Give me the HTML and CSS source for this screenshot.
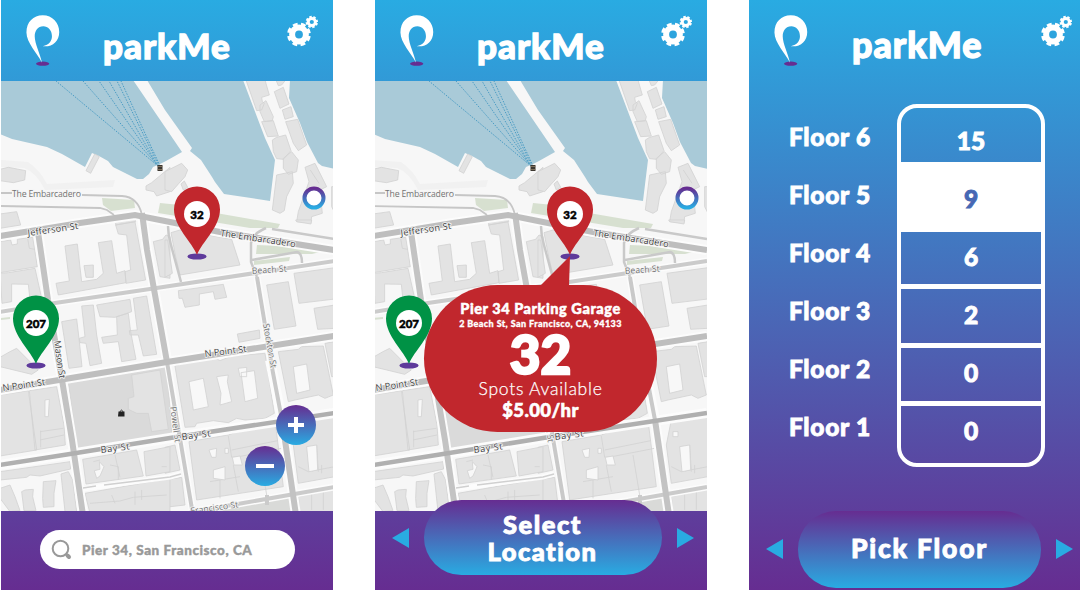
FILE: index.html
```html
<!DOCTYPE html>
<html lang="en">
<head>
<meta charset="utf-8">
<title>parkMe</title>
<link rel="stylesheet" href="styles.css">
</head>
<body>
<svg class="defs" width="0" height="0" aria-hidden="true">
  <defs>
    <linearGradient id="ring" x1="0" y1="0" x2="0" y2="1"><stop offset="0" stop-color="#662d91"/><stop offset="1" stop-color="#29abe2"/></linearGradient>
    <symbol id="logo" viewBox="78 44 102 154">
      <ellipse cx="128" cy="191" rx="20" ry="6.5" fill="#662d91"/>
      <path fill="#fff" d="M126 188C112 160 79 128 79 97C79 65 100 45 128 45C158 45 178 68 178 95C178 125 155 142 128 138C148 134 156 122 156 108C156 90 144 78 130 78C113 78 104 92 104 108C104 130 120 160 126 188Z"/>
    </symbol>
    <symbol id="gears" viewBox="0 0 32 32">
      <g fill="none" stroke="#fff">
        <circle cx="12" cy="19.5" r="6.9" stroke-width="6"/>
        <circle cx="12" cy="19.5" r="10.2" stroke-width="3.4" stroke-dasharray="4.700 3.311" stroke-dashoffset="-1.650"/>
        <circle cx="24.800" cy="7" r="3.600" stroke-width="3"/>
        <circle cx="24.800" cy="7" r="5.200" stroke-width="2" stroke-dasharray="2.400 1.684" stroke-dashoffset="-1"/>
      </g>
    </symbol>
    <g id="terrain">
      <rect x="0" y="80" width="340" height="435" fill="#f7f7f7"/>
      <g fill="#a9cad8">
        <path d="M0 80V134L12 139L47 147L62 154L85 167L92 153L99 156L108 161L113 167L125 173L137 179L143 179L149 174L153 167L160 164L166 161L182 152L133 80Z"/>
        <path d="M147 80L165 110L192 148L190 151L201 160L212 177L215 182L224 194L270 201L275 160L265 138L243 80Z"/>
        <path d="M290 80L289 98L300 123L307 142L318 163L322 166L335 169V80Z"/>
      </g>
      <path d="M0 160L28 162Q40 170 47 184L115 180L113 187L45 190Q36 172 24 168L0 167Z" fill="#f1f1f1"/>
      <g fill="none" stroke="#4b9cc4" stroke-width="1" stroke-dasharray="1.500 1.300">
        <path d="M158 166L56 81M158 166L83 81M158 166L99 81M158 166L109 81M159 166L117 81M160 166L121 81"/>
      </g>
      <g fill="#d7e0d0">
        <path d="M102 198L118 199L134 200L135 208L111 211L103 205Z"/>
        <path d="M160 203L180 205L216 213L280 224L278 228L250 228L158 213Z"/>
        <path d="M257 245L280 246L320 252L312 254L256 254Z"/>
        <path d="M254 261L290 257L289 261L254 265Z"/>
        <path d="M0 318L10 317V319L0 320Z"/>
      </g>
      <g fill="#e3e3e3" stroke="#d3d3d3" stroke-width="2.500" stroke-linejoin="round">
        <g transform="translate(0 80) scale(.3333)">
          <path d="M0 268L25 262L77 272L74 300L40 308L0 302ZM258 272L284 222L298 230L272 280ZM438 318L455 308L510 262V335L470 348L462 335L438 330ZM0 402L50 395L62 435L0 445Z"/>
        </g>
        <g transform="translate(165 80) scale(.3333)">
          <path d="M243 0L300 0L313 45L290 52L292 65L298 70L290 90L275 92ZM333 0L362 0L350 15L340 17ZM328 35L355 22L372 72L345 85ZM285 75L303 62L325 110L322 122L298 125L285 95ZM352 90L378 80L385 110L360 118ZM290 125L325 122L340 168L308 170ZM362 125L398 118L425 195L400 212L385 190ZM322 180L335 172L362 165L378 212L355 238L335 236L325 215ZM355 235L380 215L400 240L395 275L370 283L355 265ZM335 285L382 275L385 310L365 350L358 392L345 400L322 390ZM420 262L450 250L485 320L465 330L472 400L440 410L438 428L395 425L400 395L425 325L432 305ZM0 275L50 250L68 270L60 290L40 312L20 335L0 330ZM48 312L58 303L68 322L55 330ZM500 320H510V400L500 380Z"/>
          <path d="M436 270L462 310" fill="none"/>
        </g>
        <g transform="translate(0 220) scale(.3333)">
          <path d="M0 65L32 60L36 75L52 72L52 58L98 52L112 140L0 158ZM25 158L105 145L125 235L90 240L85 193L35 192L35 245L6 250L0 160ZM195 78L232 72L245 185L290 178L310 160L295 68L335 62L350 160L375 152L378 188L175 225L168 190L208 183ZM347 15L405 5L437 180L378 190L375 155L392 150L380 45L355 42ZM252 137L280 135L280 172L258 172ZM460 65L488 58L498 45L510 50V175L480 170ZM185 305L230 297L237 355L246 440L207 445ZM245 258L280 255L290 345L305 430L270 437L258 370L240 368L238 355L255 350ZM290 255L390 238L395 275L345 292L300 290ZM350 290L385 280L392 335L408 418L365 425L355 365L310 370L305 352L352 345ZM400 235L440 228L470 403L430 408L415 345L390 345L388 332L412 330ZM0 412L30 395L50 385L115 450L95 463L0 440ZM347 0L405 -8L407 5L347 15Z"/>
          <path d="M83 55L88 85L104 88" fill="none"/>
        </g>
        <g transform="translate(165 220) scale(.3333)">
          <path d="M18 38L45 30L200 58L225 135L45 165L32 110ZM0 60L8 60L22 160L0 172ZM40 212L175 193L185 232L150 238L145 215L103 222L103 255L60 262L52 235L42 235ZM305 195L370 185L393 318L328 328ZM387 160L510 143V237L402 250ZM447 265L510 255V325L458 328ZM217 342L283 330L285 355L222 367ZM392 0H440L438 12L395 5Z"/>
        </g>
        <g transform="translate(165 370) scale(.3333)">
          <path d="M30 -12L60 -22L150 -36L165 -28L200 -42L300 -50L328 130L300 145L240 150L215 145L190 158L145 152L95 160L90 170L60 172ZM340 -55L400 -62L410 -70L475 -72L505 75L480 85L460 75L390 90L370 95ZM480 -80L510 -85V20H500ZM0 60L10 95L12 170L0 175ZM0 232L30 225L45 300L0 310ZM0 330L50 322L60 405L0 412ZM72 215L190 195L230 180L332 166L355 350L290 360L95 390ZM385 225L400 150L510 130V320L400 340ZM400 380L510 355V430H405Z"/>
          <path d="M190 198L200 262L232 258L350 235M200 240L338 212M205 285L220 365M135 335L165 330V385M165 330L225 320M285 255L305 375M400 290L430 305L510 290M455 225L460 305M470 285V310M440 370V420M475 365V420" fill="none"/>
          <path d="M72 35L115 25L130 110L85 120ZM155 20L190 15L187 35L200 95L165 105L168 70ZM228 8L268 2L278 85L240 95ZM220 -5L245 -8V20H225ZM385 -10L425 -18L435 60L395 70ZM132 240L155 235L153 262L140 262ZM145 300L180 290V330L145 325ZM180 235H190V250H180ZM202 262L225 258L232 285L207 285ZM425 230L455 225L458 300L432 305ZM405 185H420V200H405Z" fill="#f8f8f8"/>
          <path d="M75 430L250 400L375 378L382 430Z" fill="#d9dad8" stroke="none"/>
        </g>
        <g transform="translate(0 370) scale(.3333)">
          <path d="M205 35L500 -20L516 200L232 235Z" fill="#dadada"/>
          <path d="M395 15L480 0L505 178L455 185L445 130L410 130L385 118L385 85L402 80Z"/>
          <path d="M0 75L85 62L110 240L0 258ZM88 62L170 50L192 165L196 225L105 240ZM0 305L210 275L212 297L120 318L90 315L80 322L0 330ZM0 355L30 345L45 380L60 422L30 425L0 385ZM65 365L75 360L100 358L98 380L108 422H72ZM130 335L168 332L162 370L162 410L130 412L128 385ZM183 312L205 305L218 330L230 425H195ZM248 268L410 240L430 318L258 342ZM432 245L510 230V305L438 318ZM255 370L510 325V430H270Z"/>
          <path d="M120 185L190 175M122 182V232M120 210L192 195M345 255L360 322M280 275L300 270M330 285L355 290V330M485 290H500M270 400L360 393L400 382L500 375M335 375L345 400M405 365V405M425 360V390" fill="none"/>
          <path d="M135 90L148 88L145 140L135 140ZM283 302L300 298L298 275L312 290L300 318L290 325Z" fill="#f8f8f8"/>
        </g>
      </g>
      <g fill="none" stroke="#fcfcfc">
        <path stroke-width="10" d="M0 236L80 223L135 215L165 221L220 232L334 250M0 390L47 382L77 377L167 362L334 336M0 465L70 454L170 438L334 413M142 215L147 250L167 360M38 232L48 300L62 380L72 440L83 515M282 420L296 515M270 360L282 420"/>
        <path stroke-width="7" d="M0 312L55 303L150 289L334 261M257 277L273 373M167 360L193 515M190 512L232 505L334 487"/>
        <path stroke-width="5" d="M83 489L170 477L181 474"/>
      </g>
      <g fill="none" stroke="#c0c0c0">
        <path stroke-width="1.800" stroke="#c6c6c6" d="M0 193H12M82 195L122 196Q138 197 142 215M0 206L100 208L107 210L114 215"/>
        <path stroke-width="2.500" stroke="#c9c9c9" d="M272 229L334 239M168 226Q168 235 171 245L181 282M266 228Q252 234 251 243L251 262L257 277M252 260L297 252Q302 253 302 263"/>
        <path stroke-width="4" stroke="#cbcbcb" d="M0 312L55 303L150 289L334 261M232 505L334 487M190 512L232 505M267 495V505"/>
        <path stroke-width="4" stroke="#c9c9c9" d="M257 277L273 373L282 420M167 362L193 515"/>
        <path stroke-width="6" stroke="#c3c3c3" d="M142 213L147 250L167 362M38 232L48 300L62 380L72 440L83 515M282 420L296 515"/>
        <path stroke-width="6" stroke="#bebebe" d="M0 236L80 223L135 215L165 221L220 232L334 250M0 390L47 382L77 377L167 362L334 336"/>
        <path stroke-width="4.500" stroke="#b0b0b0" d="M0 465L70 454L170 438L334 413"/>
        <path stroke-width="1.500" stroke="#d0d0d0" d="M83 488L96 486M104 485L170 477L181 474"/>
      </g>
      <path d="M157.500 165H162.500V171H157.500Z" fill="#3c3730"/><path d="M157.500 166.500H162.500M157.500 169.500H162.500" stroke="#998870" stroke-width=".7"/>
      <path d="M118.500 411.500H124.500V416.500H118Z" fill="#222"/><path d="M120 412Q121.500 408 123 412" fill="none" stroke="#222" stroke-width=".8"/>
    </g>
    <g id="pin">
      <ellipse cx="0" cy="1.500" rx="9.600" ry="3.100" fill="#5e3a9b"/>
      <path d="M0 0C-5 -13 -23 -28 -23 -45.500A23 23 0 0 1 23 -45.500C23 -28 5 -13 0 0Z"/>
      <circle cx="0" cy="-41" r="13" fill="#fff"/>
    </g>
  </defs>
</svg>

<main class="screens">
  <section class="screen">
    <header class="top">
      <svg class="logo"><use href="#logo"/></svg>
      <h1 class="brand">parkMe</h1>
      <svg class="gears"><use href="#gears"/></svg>
    </header>
    <div class="map">
      <svg class="map-canvas" viewBox="1 81 332 430">
        <use href="#terrain"/>
        <g class="streets">
          <text class="soft" x="12" y="197" textLength="69">The Embarcadero</text>
          <text transform="translate(28 236) rotate(-8)" textLength="51">Jefferson St</text>
          <text transform="translate(220 236) rotate(8.500)" textLength="76">The Embarcadero</text>
          <text class="soft" transform="translate(252 274) rotate(-4)" textLength="35">Beach St</text>
          <text transform="translate(54 341) rotate(82)" textLength="38">Mason St</text>
          <text transform="translate(3 391) rotate(-8)" textLength="43">N Point St</text>
          <text transform="translate(205 357) rotate(-7)" textLength="42">N Point St</text>
          <text class="soft" transform="translate(263 324) rotate(80)" textLength="45">Stockton St</text>
          <text class="soft" transform="translate(170 407) rotate(82)" textLength="36">Powell St</text>
          <text transform="translate(101 453) rotate(-7)" textLength="29">Bay St</text>
          <text transform="translate(182 440) rotate(-7)" textLength="29">Bay St</text>
          <text class="soft" transform="translate(191 514) rotate(-8)" textLength="48">Francisco St</text>
        </g>
        <circle cx="314" cy="198" r="9.500" fill="#fff" stroke="url(#ring)" stroke-width="4"/>
        <use href="#pin" x="197" y="255" fill="#c1272d"/>
        <use href="#pin" x="36" y="364" fill="#009245"/>
        <text class="count" x="197" y="218.500">32</text>
        <text class="count" x="36" y="327.500">207</text>
      </svg>
      <button class="zoom zoom-in" aria-label="Zoom in"><svg viewBox="0 0 18 18"><path d="M9 1V17M1 9H17"/></svg></button>
      <button class="zoom zoom-out" aria-label="Zoom out"><svg viewBox="0 0 18 18"><path d="M0 9H18"/></svg></button>
    </div>
    <footer class="bottom search-bar">
      <div class="search">
        <svg class="glass" viewBox="0 0 22 22"><circle cx="9.500" cy="9.500" r="7.800"/><path class="handle" d="M15 15L16.500 16.500"/><path class="grip" d="M16.500 16.500L18 18"/></svg>
        <span>Pier 34, San Francisco, CA</span>
      </div>
    </footer>
  </section>

  <section class="screen">
    <header class="top">
      <svg class="logo"><use href="#logo"/></svg>
      <h1 class="brand">parkMe</h1>
      <svg class="gears"><use href="#gears"/></svg>
    </header>
    <div class="map">
      <svg class="map-canvas" viewBox="2 81 332 430">
        <use href="#terrain"/>
        <g class="streets">
          <text class="soft" x="12" y="197" textLength="69">The Embarcadero</text>
          <text transform="translate(28 236) rotate(-8)" textLength="51">Jefferson St</text>
          <text transform="translate(220 236) rotate(8.500)" textLength="76">The Embarcadero</text>
          <text class="soft" transform="translate(252 274) rotate(-4)" textLength="35">Beach St</text>
          <text transform="translate(3 391) rotate(-8)" textLength="43">N Point St</text>
          <text class="soft" transform="translate(170 407) rotate(82)" textLength="36">Powell St</text>
          <text transform="translate(101 453) rotate(-7)" textLength="29">Bay St</text>
          <text transform="translate(182 440) rotate(-7)" textLength="29">Bay St</text>
        </g>
        <circle cx="314" cy="198" r="9.500" fill="#fff" stroke="url(#ring)" stroke-width="4"/>
        <use href="#pin" x="197" y="255" fill="#c1272d"/>
        <use href="#pin" x="36" y="364" fill="#009245"/>
        <text class="count" x="197" y="218.500">32</text>
        <text class="count" x="36" y="327.500">207</text>
        <path d="M197 256L167 286H196Z" fill="#c1272d"/>
      </svg>
      <div class="bubble">
        <strong class="place">Pier 34 Parking Garage</strong>
        <span class="address">2 Beach St, San Francisco, CA, 94133</span>
        <strong class="spots">32</strong>
        <span class="caption">Spots Available</span>
        <strong class="price">$5.00/hr</strong>
      </div>
    </div>
    <footer class="bottom nav">
      <svg class="arrow" viewBox="0 0 17 20"><path d="M17 0V20L0 10Z"/></svg>
      <button class="pill">Select<br>Location</button>
      <svg class="arrow" viewBox="0 0 17 20"><path d="M0 0V20L17 10Z"/></svg>
    </footer>
  </section>

  <section class="screen floors-screen">
    <header class="top">
      <svg class="logo"><use href="#logo"/></svg>
      <h1 class="brand">parkMe</h1>
      <svg class="gears"><use href="#gears"/></svg>
    </header>
    <div class="floors">
      <ul class="labels">
        <li>Floor 6</li><li>Floor 5</li><li>Floor 4</li><li>Floor 3</li><li>Floor 2</li><li>Floor 1</li>
      </ul>
      <ul class="tower">
        <li>15</li><li class="selected">9</li><li>6</li><li>2</li><li>0</li><li>0</li>
      </ul>
    </div>
    <footer class="bottom nav">
      <svg class="arrow" viewBox="0 0 17 20"><path d="M17 0V20L0 10Z"/></svg>
      <button class="pill">Pick Floor</button>
      <svg class="arrow" viewBox="0 0 17 20"><path d="M0 0V20L17 10Z"/></svg>
    </footer>
  </section>
</main>
</body>
</html>
```
FILE: styles.css
```css
* { box-sizing: border-box; }
body {
  margin: 0;
  background: #fff;
  color: #fff;
  font-family: Lato, "Open Sans", sans-serif;
  font-weight: 900;
  overflow: hidden;
}
ul { list-style: none; margin: 0; padding: 0; }
button { border: 0; padding: 0; color: inherit; font: inherit; }
.defs { position: absolute; }

.screens { display: flex; gap: 42px; padding-left: 1px; height: 590px; }
.screen {
  flex: none;
  width: 332px;
  height: 590px;
  display: flex;
  flex-direction: column;
  background: linear-gradient(#29abe2, #662d91);
}

.top { height: 81px; flex: none; display: flex; align-items: flex-start; padding: 15px 14px 0 25px; }
.logo { width: 34px; height: 51px; }
.brand {
  margin: 10px 0 0 43px;
  width: 132px;
  font-size: 35px;
  line-height: 40px;
  font-weight: 900;
  letter-spacing: 1px;
  white-space: nowrap;
  -webkit-text-stroke: 1.3px currentColor;
}
.gears { width: 32px; height: 32px; margin-left: auto; }

.map { position: relative; height: 430px; flex: none; }
.map-canvas { display: block; width: 332px; height: 430px; }
.streets text {
  font: 500 9.2px "Open Sans", "Noto Sans", sans-serif;
  fill: #3f3f3f;
  stroke: #f5f5f5;
  stroke-width: 1.5px;
  paint-order: stroke;
}
.streets .soft { fill: #737373; font-size: 8.8px; }
.count { font: 900 11.5px Lato, sans-serif; fill: #000; stroke: #000; stroke-width: 0.5px; text-anchor: middle; }

.zoom {
  position: absolute;
  width: 40px;
  height: 40px;
  border-radius: 50%;
  background: linear-gradient(#662d91, #29abe2);
  display: grid;
  place-items: center;
}
.zoom svg { width: 18px; height: 18px; stroke: #fff; stroke-width: 4; fill: none; }
.zoom-in { left: 275px; top: 324px; }
.zoom-out { left: 244px; top: 365px; }

.bottom { flex: none; height: 79px; position: relative; }
.search-bar { padding: 19px 38px 0 39px; }
.search {
  height: 39px;
  border-radius: 20px;
  background: #fff;
  color: #999;
  display: flex;
  align-items: center;
  gap: 9px;
  padding-left: 11px;
  font-size: 13.5px;
  letter-spacing: 0.55px;
  white-space: nowrap;
  -webkit-text-stroke: 0.4px currentColor;
}
.glass { width: 22px; height: 22px; fill: none; stroke: #999; stroke-width: 2; }
.glass .handle { stroke-width: 2.5; }
.glass .grip { stroke-width: 4; stroke-linecap: round; }

.bubble {
  position: absolute;
  left: 49px;
  top: 203.5px;
  width: 233px;
  height: 147px;
  border-radius: 74px;
  background: #c1272d;
  display: flex;
  flex-direction: column;
  align-items: center;
  padding-top: 15px;
  white-space: nowrap;
}
.place { font-size: 14.5px; line-height: 18px; font-weight: 900; letter-spacing: 0.55px; -webkit-text-stroke: 0.5px currentColor; }
.address { font-size: 9px; line-height: 12px; letter-spacing: 0.4px; -webkit-text-stroke: 0.3px currentColor; }
.spots { font-size: 53px; line-height: 48px; font-weight: 900; -webkit-text-stroke: 2.4px currentColor; }
.caption { font-size: 17.5px; line-height: 20px; font-weight: 300; letter-spacing: 0.75px; -webkit-text-stroke: 0.25px currentColor; margin-top: 1px; }
.price { font-size: 18.5px; line-height: 22px; font-weight: 900; letter-spacing: 0.4px; -webkit-text-stroke: 0.6px currentColor; }

.nav { display: flex; align-items: flex-start; justify-content: center; gap: 15px; padding-left: 3px; }
.pill {
  margin-top: -11px;
  width: 238px;
  height: 75px;
  border-radius: 38px;
  background: linear-gradient(#662d91, #29abe2);
  font-size: 25.5px;
  line-height: 27px;
  letter-spacing: 1.5px;
  white-space: nowrap;
  -webkit-text-stroke: 0.9px currentColor;
}
.arrow { flex: none; width: 17px; height: 20px; margin-top: 17px; fill: #29abe2; }

.floors-screen .top { padding-right: 8px; }
.floors-screen .brand { font-size: 35.8px; margin-left: 44px; }
.floors { height: 430px; flex: none; display: flex; align-items: flex-start; padding: 23px 0 0 40px; }
.labels { width: 108px; padding-top: 4px; font-size: 24.5px; line-height: 58px; letter-spacing: 0.7px; -webkit-text-stroke: 0.9px currentColor; }
.tower {
  width: 148px;
  height: 363px;
  border: 4px solid #fff;
  border-radius: 20px;
  text-align: center;
  font-size: 24.5px;
  line-height: 24px;
  -webkit-text-stroke: 0.9px currentColor;
}
.tower li { height: 59px; padding-top: 14px; border-bottom: 5px solid #fff; }
.tower li:first-child { height: 54px; padding-top: 21px; border: 0; }
.tower .selected { height: 70px; padding-top: 25px; border: 0; background: #fff; color: #4668b4; }
.tower li:nth-child(3) { height: 57px; padding-top: 13px; }
.tower li:nth-child(5) { height: 58px; padding-top: 13px; }
.tower li:last-child { height: 57px; padding-top: 13px; border: 0; }
.floors-screen .nav { padding-left: 9px; }
.floors-screen .pill { width: 243px; height: 77px; margin-top: 0; padding-bottom: 3px; font-size: 26.5px; letter-spacing: 1.8px; }
.floors-screen .arrow { margin-top: 28px; }
```
